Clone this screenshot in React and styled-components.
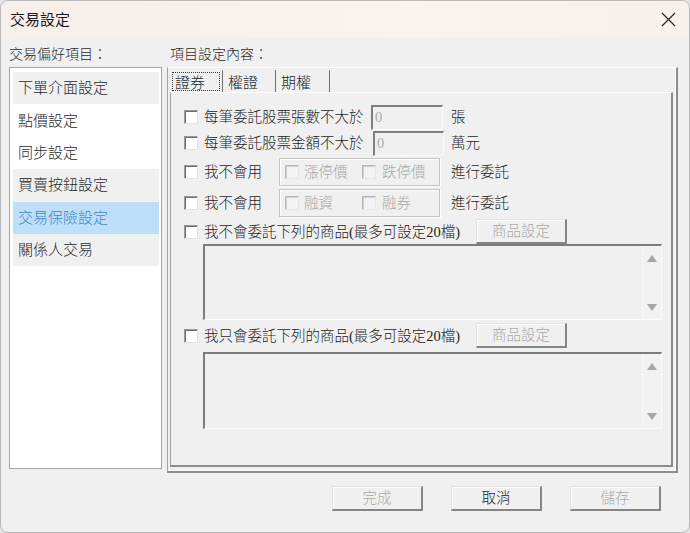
import React from "react";
import styled, { createGlobalStyle } from "styled-components";

const GlobalStyle = createGlobalStyle`
  html, body { margin: 0; padding: 0; background: #e4e4e4; }
  body { font-family: "Noto Sans CJK TC", "Noto Sans", sans-serif; color: #1b1b1b; }
  * { box-sizing: border-box; }
`;

const Window = styled.div`
  width: 690px;
  height: 533px;
  border: 1px solid #b9b9b9;
  border-radius: 8px;
  overflow: hidden;
  background: #f0f0f0;
  display: flex;
  flex-direction: column;
`;

const TitleBar = styled.div`
  height: 36px;
  flex: none;
  display: flex;
  align-items: center;
  justify-content: space-between;
  padding: 0 13px 0 9px;
  background: linear-gradient(90deg, #f6efea 0%, #fbf3ee 60%, #f8f0eb 100%);
`;

const Title = styled.div`
  font-size: 15px;
  line-height: 20px;
  color: #1a1a1a;
`;

const Body = styled.div`
  flex: 1;
  display: flex;
  flex-direction: column;
  padding-left: 8px;
`;

const Headings = styled.div`
  height: 30px;
  display: flex;
  align-items: center;
  padding-top: 2px;
`;

const Heading = styled.div`
  width: ${(p) => p.$w}px;
  padding-left: ${(p) => p.$pl || 0}px;
  font-size: 14px;
  font-weight: 300;
  line-height: 18px;
  color: #2a2a2a;
`;

const Main = styled.div`
  display: flex;
  gap: 5px;
  align-items: flex-start;
  height: 406px;
`;

const SideList = styled.div`
  width: 153px;
  height: 402px;
  border: 1px solid #a6a6a6;
  background: #ffffff;
  padding: 4px 2px 0 3px;
`;

const SideItem = styled.div`
  height: 32.4px;
  display: flex;
  align-items: center;
  padding-left: 5px;
  padding-bottom: 2px;
  font-size: 15px;
  font-weight: 300;
  line-height: 20px;
  background: ${(p) =>
    p.$variant === "sel" ? "#bddff8" : p.$variant === "grey" ? "#f0f0f0" : "#ffffff"};
  color: ${(p) => (p.$variant === "sel" ? "#3f86c9" : "#2a2a2a")};
`;

const Frame = styled.div`
  width: 511px;
  height: 406px;
  display: flex;
  flex-direction: column;
  border-top: 1px solid #ffffff;
  border-left: 1px solid #a2a2a2;
  border-right: 2px solid #8c8c8c;
  border-bottom: 2px solid #8c8c8c;
  box-shadow: inset -1px -1px 0 #ffffff;
  padding: 2px 3px 4px 2px;
`;

const Tabs = styled.div`
  height: 22px;
  display: flex;
  flex: none;
`;

const Tab = styled.div`
  width: ${(p) => p.$w}px;
  height: 22px;
  padding: 2px 2px 1px 2px;
  border-right: 1px solid #707070;
  display: flex;
`;

const TabLabel = styled.div`
  flex: 1;
  display: flex;
  align-items: center;
  padding-left: 2px;
  font-size: 15px;
  font-weight: 300;
  line-height: 18px;
  color: #1f1f1f;
  border: 1px dotted ${(p) => (p.$focus ? "#3a3a3a" : "transparent")};
`;

const Panel = styled.div`
  flex: 1;
  display: flex;
  flex-direction: column;
  border-top: 1px solid #ffffff;
  border-left: 1px solid #a2a2a2;
  border-right: 2px solid #8c8c8c;
  border-bottom: 2px solid #8c8c8c;
  padding: 11px 9px 0 13px;
  font-family: "Liberation Serif", "Noto Sans CJK TC", serif;
`;

const Row = styled.div`
  display: flex;
  align-items: center;
  height: ${(p) => p.$h}px;
  margin-top: ${(p) => p.$mt || 0}px;
  flex: none;
`;

const Check = styled.span`
  width: 14px;
  height: 14px;
  flex: none;
  display: inline-block;
  border: 1px solid;
  border-color: ${(p) =>
    p.$disabled ? "#b9b9b9 #e6e6e6 #e6e6e6 #b9b9b9" : "#9a9a9a #e2e2e2 #e2e2e2 #9a9a9a"};
  box-shadow: inset 1px 1px 0 ${(p) => (p.$disabled ? "#cfcfcf" : "#6d6d6d")};
  background: ${(p) => (p.$disabled ? "#f3f3f3" : "#ffffff")};
`;

const Label = styled.span`
  display: inline-block;
  width: ${(p) => (p.$w ? `${p.$w}px` : "auto")};
  margin-left: ${(p) => (p.$ml === undefined ? 6 : p.$ml)}px;
  font-size: 14.5px;
  font-weight: 300;
  line-height: 18px;
  white-space: nowrap;
  color: ${(p) => (p.$disabled ? "#a9a9a9" : "#1d1d1d")};
`;

const Field = styled.div`
  width: ${(p) => p.$w}px;
  height: 25px;
  flex: none;
  background: #f0f0f0;
  border-top: 2px solid #7f7f7f;
  border-left: 2px solid #7f7f7f;
  border-right: 1px solid #fafafa;
  border-bottom: 1px solid #fafafa;
  padding: 1px 0 0 2px;
  font-size: 14.5px;
  line-height: 18px;
  color: #ababab;
`;

const Unit = styled.span`
  margin-left: ${(p) => p.$ml}px;
  font-size: 14.5px;
  font-weight: 300;
  line-height: 18px;
  color: #1d1d1d;
`;

const Group = styled.div`
  width: 161px;
  height: 28px;
  flex: none;
  display: flex;
  align-items: center;
  padding-left: 5px;
  border: 1px solid #c4c4c4;
  box-shadow: inset 1px 1px 0 #ffffff, 1px 1px 0 #ffffff;
`;

const GroupItem = styled.div`
  width: 77px;
  display: flex;
  align-items: center;
`;

const Button = styled.div`
  width: 91px;
  height: 25px;
  flex: none;
  display: flex;
  align-items: center;
  justify-content: center;
  background: #f0f0f0;
  border-top: 1px solid #e2e2e2;
  border-left: 1px solid #e2e2e2;
  border-right: 2px solid #858585;
  border-bottom: 2px solid #858585;
  box-shadow: inset 1px 1px 0 #fbfbfb;
  font-size: 14.5px;
  font-weight: 300;
  line-height: 18px;
  color: ${(p) => (p.$disabled ? "#a9a9a9" : "#1d1d1d")};
`;

const ListBox = styled.div`
  width: 459px;
  height: ${(p) => p.$h}px;
  margin-left: 19px;
  margin-top: ${(p) => p.$mt || 0}px;
  flex: none;
  display: flex;
  justify-content: flex-end;
  background: #f0f0f0;
  border-top: 2px solid #7d7d7d;
  border-left: 2px solid #7d7d7d;
  border-right: 1px solid #fbfbfb;
  border-bottom: 1px solid #fbfbfb;
`;

const ScrollCol = styled.div`
  width: 19px;
  display: flex;
  flex-direction: column;
  align-items: center;
  justify-content: space-between;
  padding: 9px 0 8px;
  background: #f2f2f2;
  border-left: 1px solid #f7f7f7;
`;

const Footer = styled.div`
  margin-top: 13px;
  height: 25px;
  display: flex;
  justify-content: flex-end;
  gap: 28px;
  padding-right: 28px;
  font-family: "Liberation Serif", "Noto Sans CJK TC", serif;
`;

const Arrow = ({ down }) => (
  <svg width="10" height="7" viewBox="0 0 10 7">
    <path d={down ? "M0 0 L10 0 L5 7 Z" : "M0 7 L10 7 L5 0 Z"} fill="#a6a6a6" />
  </svg>
);

const CloseIcon = () => (
  <svg width="15" height="15" viewBox="0 0 15 15">
    <path d="M1 1 L14 14 M14 1 L1 14" stroke="#222" strokeWidth="1.1" fill="none" />
  </svg>
);

const sideItems = [
  ["下單介面設定", "grey"],
  ["點價設定", "white"],
  ["同步設定", "white"],
  ["買賣按鈕設定", "grey"],
  ["交易保險設定", "sel"],
  ["關係人交易", "grey"],
];

export default function App() {
  return (
    <>
      <GlobalStyle />
      <Window>
        <TitleBar>
          <Title>交易設定</Title>
          <CloseIcon />
        </TitleBar>
        <Body>
          <Headings>
            <Heading $w={158}>交易偏好項目：</Heading>
            <Heading $w={300} $pl={3}>項目設定內容：</Heading>
          </Headings>
          <Main>
            <SideList>
              {sideItems.map(([t, v]) => (
                <SideItem key={t} $variant={v}>{t}</SideItem>
              ))}
            </SideList>
            <Frame>
              <Tabs>
                <Tab $w={53}><TabLabel $focus>證券</TabLabel></Tab>
                <Tab $w={53}><TabLabel>權證</TabLabel></Tab>
                <Tab $w={54}><TabLabel>期權</TabLabel></Tab>
              </Tabs>
              <Panel>
                <Row $h={26}>
                  <Check />
                  <Label $w={167}>每筆委託股票張數不大於</Label>
                  <Field $w={72}>0</Field>
                  <Unit $ml={8}>張</Unit>
                </Row>
                <Row $h={26}>
                  <Check />
                  <Label $w={169}>每筆委託股票金額不大於</Label>
                  <Field $w={71}>0</Field>
                  <Unit $ml={7}>萬元</Unit>
                </Row>
                <Row $h={28} $mt={2}>
                  <Check />
                  <Label $w={75}>我不會用</Label>
                  <Group>
                    <GroupItem><Check $disabled /><Label $ml={5} $disabled>漲停價</Label></GroupItem>
                    <GroupItem><Check $disabled /><Label $ml={6} $disabled>跌停價</Label></GroupItem>
                  </Group>
                  <Unit $ml={11}>進行委託</Unit>
                </Row>
                <Row $h={28} $mt={3}>
                  <Check />
                  <Label $w={75}>我不會用</Label>
                  <Group>
                    <GroupItem><Check $disabled /><Label $ml={5} $disabled>融資</Label></GroupItem>
                    <GroupItem><Check $disabled /><Label $ml={6} $disabled>融券</Label></GroupItem>
                  </Group>
                  <Unit $ml={11}>進行委託</Unit>
                </Row>
                <Row $h={25} $mt={2}>
                  <Check />
                  <Label $w={272}>我不會委託下列的商品(最多可設定20檔)</Label>
                  <Button $disabled>商品設定</Button>
                </Row>
                <ListBox $h={76}>
                  <ScrollCol><Arrow /><Arrow down /></ScrollCol>
                </ListBox>
                <Row $h={25} $mt={3}>
                  <Check />
                  <Label $w={272}>我只會委託下列的商品(最多可設定20檔)</Label>
                  <Button $disabled>商品設定</Button>
                </Row>
                <ListBox $h={77} $mt={4}>
                  <ScrollCol><Arrow /><Arrow down /></ScrollCol>
                </ListBox>
              </Panel>
            </Frame>
          </Main>
          <Footer>
            <Button $disabled>完成</Button>
            <Button>取消</Button>
            <Button $disabled>儲存</Button>
          </Footer>
        </Body>
      </Window>
    </>
  );
}
